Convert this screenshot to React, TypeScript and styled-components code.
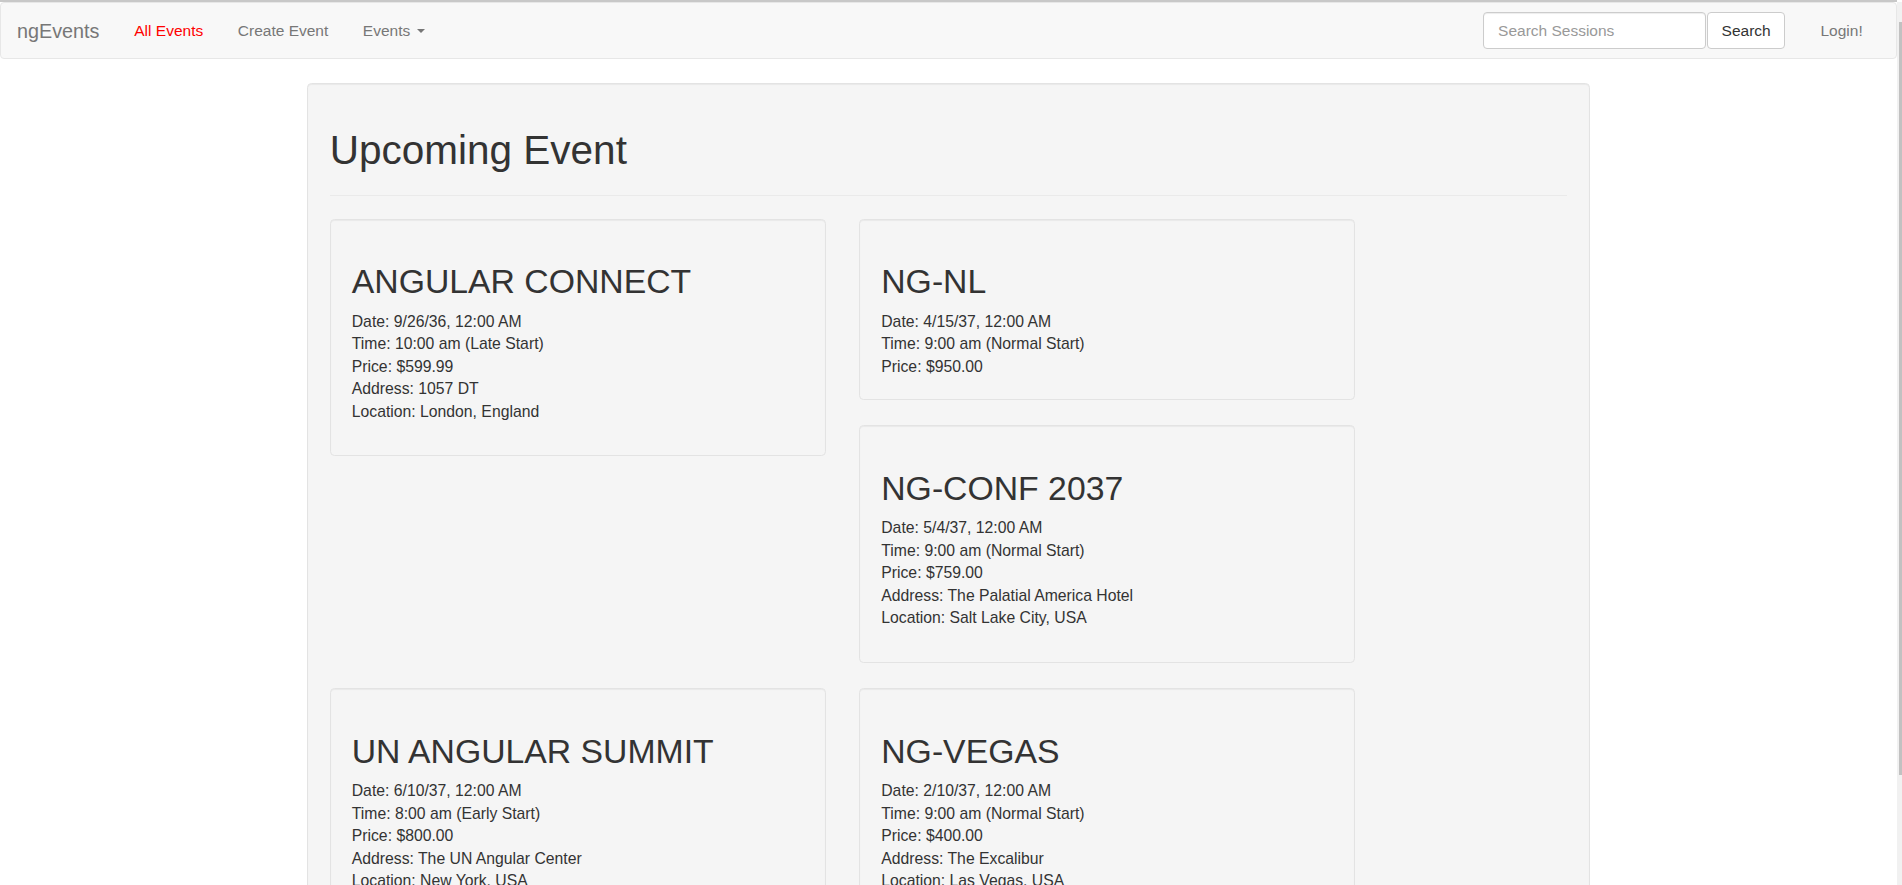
import React from "react";
import styled, { createGlobalStyle } from "styled-components";

const GlobalStyle = createGlobalStyle`
  html { scrollbar-width: none; }
  html::-webkit-scrollbar { display: none; }
  *, *::before, *::after { box-sizing: border-box; }
  body {
    margin: 0;
    background: #fff;
    font-family: "Liberation Sans", Arial, Helvetica, sans-serif;
    font-size: 15.75px;
    line-height: 22.5px;
    color: #333;
  }
`;

const Page = styled.div`
  width: calc(100vw - 5px);
`;

const WindowEdge = styled.div`
  height: 2px;
  background: #c8c8c8;
`;

const ScrollTrack = styled.div`
  position: fixed;
  top: 2px;
  right: 0;
  bottom: 0;
  width: 5px;
  background: #f1f1f1;
`;

const ScrollThumb = styled.div`
  position: absolute;
  top: 20px;
  right: 0;
  width: 3px;
  height: 753px;
  background: #c1c1c1;
`;

const Navbar = styled.nav`
  display: flex;
  align-items: center;
  height: 57px;
  padding: 0 16px 0 0;
  background: #f8f8f8;
  border: 1px solid #e7e7e7;
  border-radius: 4px;
`;

const Brand = styled.a`
  padding: 0 17.5px 0 16px;
  font-size: 19.8px;
  line-height: 22px;
  color: #777;
  text-decoration: none;
`;

const NavList = styled.div`
  display: flex;
  align-items: center;
`;

const NavLink = styled.a<{ $active?: boolean }>`
  padding: 0 17.3px;
  font-size: 15.5px;
  line-height: 22px;
  color: ${(p) => (p.$active ? "#ff0000" : "#777")};
  text-decoration: none;
  white-space: nowrap;
`;

const Caret = styled.span`
  display: inline-block;
  width: 0;
  height: 0;
  margin-left: 2px;
  vertical-align: middle;
  border-top: 4.5px dashed #777;
  border-left: 4.5px solid transparent;
  border-right: 4.5px solid transparent;
`;

const RightGroup = styled.div`
  display: flex;
  align-items: center;
  margin-left: auto;
`;

const SearchForm = styled.form`
  display: flex;
  align-items: center;
  gap: 1px;
  margin: 0 18px 0 0;
`;

const SearchInput = styled.input`
  width: 223px;
  height: 37px;
  padding: 0 14px;
  font-family: inherit;
  font-size: 15.5px;
  color: #555;
  background: #fff;
  border: 1px solid #ccc;
  border-radius: 4px;
  box-shadow: inset 0 1px 1px rgba(0, 0, 0, 0.075);
  outline: none;
  &::placeholder {
    color: #999;
  }
`;

const SearchButton = styled.button`
  height: 37px;
  padding: 0 13.5px;
  font-family: inherit;
  font-size: 15.5px;
  font-weight: 400;
  color: #333;
  background: #fff;
  border: 1px solid #ccc;
  border-radius: 4px;
  cursor: pointer;
`;

const Container = styled.main`
  width: 1282.5px;
  margin: 24px auto 0;
`;

const Well = styled.section`
  padding: 21px 21.5px;
  background: #f5f5f5;
  border: 1px solid #e3e3e3;
  border-radius: 4.5px;
  box-shadow: inset 0 1px 1px rgba(0, 0, 0, 0.05);
`;

const Title = styled.h1`
  margin: 23px 0 0;
  font-size: 40.5px;
  line-height: 44.55px;
  font-weight: 400;
  color: #333;
`;

const Divider = styled.hr`
  margin: 22.5px 0 22.5px;
  border: 0;
  border-top: 1px solid #eaeaea;
`;

const EventGrid = styled.div`
  display: grid;
  grid-template-columns: 495.75px 495.75px;
  grid-template-areas:
    "a b"
    "a c"
    "d e";
  column-gap: 33.75px;
  row-gap: 25px;
`;

const Card = styled.article<{ $area: string }>`
  grid-area: ${(p) => p.$area};
  align-self: start;
  padding: 21px;
  background: #f5f5f5;
  border: 1px solid #e3e3e3;
  border-radius: 4.5px;
  box-shadow: inset 0 1px 1px rgba(0, 0, 0, 0.05);
`;

const CardTitle = styled.h2`
  margin: 22.5px 0 10.5px;
  font-size: 33.75px;
  line-height: 37.125px;
  font-weight: 400;
  color: #333;
`;

const Line = styled.div``;

const LocationBlock = styled.div`
  margin-bottom: 11.25px;
`;

type EventItem = {
  area: string;
  name: string;
  date: string;
  time: string;
  price: string;
  address?: string;
  location?: string;
};

const events: EventItem[] = [
  {
    area: "a",
    name: "ANGULAR CONNECT",
    date: "9/26/36, 12:00 AM",
    time: "10:00 am (Late Start)",
    price: "$599.99",
    address: "1057 DT",
    location: "London, England",
  },
  {
    area: "b",
    name: "NG-NL",
    date: "4/15/37, 12:00 AM",
    time: "9:00 am (Normal Start)",
    price: "$950.00",
  },
  {
    area: "c",
    name: "NG-CONF 2037",
    date: "5/4/37, 12:00 AM",
    time: "9:00 am (Normal Start)",
    price: "$759.00",
    address: "The Palatial America Hotel",
    location: "Salt Lake City, USA",
  },
  {
    area: "d",
    name: "UN ANGULAR SUMMIT",
    date: "6/10/37, 12:00 AM",
    time: "8:00 am (Early Start)",
    price: "$800.00",
    address: "The UN Angular Center",
    location: "New York, USA",
  },
  {
    area: "e",
    name: "NG-VEGAS",
    date: "2/10/37, 12:00 AM",
    time: "9:00 am (Normal Start)",
    price: "$400.00",
    address: "The Excalibur",
    location: "Las Vegas, USA",
  },
];

export default function App() {
  return (
    <Page>
      <GlobalStyle />
      <WindowEdge />
      <Navbar>
        <Brand href="#">ngEvents</Brand>
        <NavList>
          <NavLink href="#" $active>
            All Events
          </NavLink>
          <NavLink href="#">Create Event</NavLink>
          <NavLink href="#">
            Events <Caret />
          </NavLink>
        </NavList>
        <RightGroup>
          <SearchForm onSubmit={(e) => e.preventDefault()}>
            <SearchInput type="text" placeholder="Search Sessions" />
            <SearchButton type="submit">Search</SearchButton>
          </SearchForm>
          <NavLink href="#">Login!</NavLink>
        </RightGroup>
      </Navbar>
      <Container>
        <Well>
          <Title>Upcoming Event</Title>
          <Divider />
          <EventGrid>
            {events.map((ev) => (
              <Card key={ev.name} $area={ev.area}>
                <CardTitle>{ev.name}</CardTitle>
                <Line>Date: {ev.date}</Line>
                <Line>Time: {ev.time}</Line>
                <Line>Price: {ev.price}</Line>
                {ev.address && (
                  <LocationBlock>
                    <Line>Address: {ev.address}</Line>
                    <Line>Location: {ev.location}</Line>
                  </LocationBlock>
                )}
              </Card>
            ))}
          </EventGrid>
        </Well>
      </Container>
      <ScrollTrack>
        <ScrollThumb />
      </ScrollTrack>
    </Page>
  );
}
